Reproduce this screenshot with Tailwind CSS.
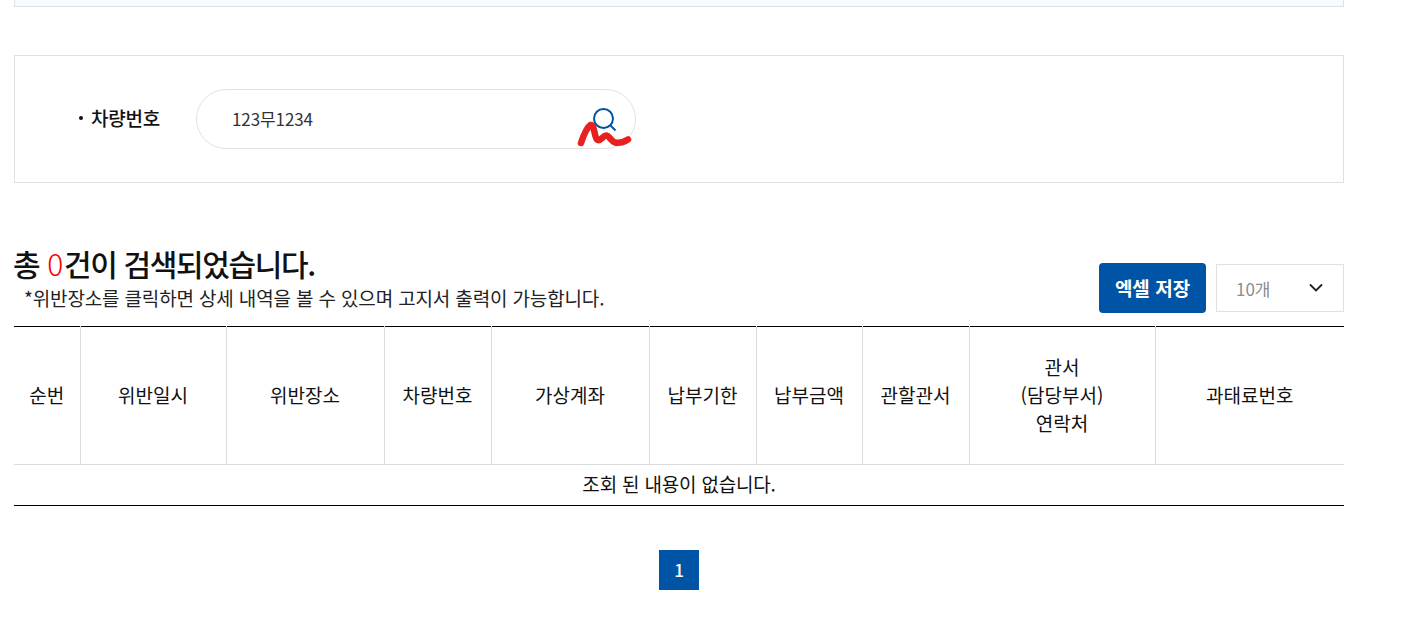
<!DOCTYPE html>
<html lang="ko">
  <head>
    <meta charset="UTF-8" />
    <title>차량번호 조회</title>
    <script src="https://cdn.jsdelivr.net/npm/@tailwindcss/browser@4"></script>
  </head>
  <body class="bg-white text-black font-['Noto_Sans_CJK_KR','Noto_Sans',sans-serif] h-[635px] overflow-hidden">
    <div class="ml-[14px] w-[1330px]">
      <!-- 상단 박스 -->
      <div class="h-[7px] bg-[#f7fafe] border-x border-b border-[#e1e1e1]"></div>

      <!-- 검색 -->
      <section class="mt-[48px] h-[128px] border border-[#e1e1e1] flex items-center pl-[62px]">
        <span class="text-[19px] font-medium w-[119px] tracking-[-0.2px] text-[#111] -mt-[2px] flex items-center"><span class="w-[4px] h-[4px] ml-[2px] mr-[8px] rounded-full bg-[#111]"></span>차량번호</span>
        <div class="relative w-[440px] h-[60px] rounded-[30px] border border-[#e1e1e1] flex items-center pl-[35px] text-[17px] text-[#333] tracking-[-0.1px]">
          123무1234
          <svg class="absolute left-[380px] top-[16px] w-[62px] h-[48px]" viewBox="0 0 62 48" fill="none">
            <circle cx="26.500" cy="12.500" r="9.500" stroke="#0054a6" stroke-width="2" />
            <path d="M33.500 19.500 L38.500 24.500" stroke="#0054a6" stroke-width="2" />
            <path d="M4 37 C6 31 9 22 13.500 19 C17.500 18 17 30 20 33.500 C23.500 36.500 26 29 29.500 29.500 C32.500 30 34 35 38 36.500 C42 37.500 47 36 51 33.500" stroke="#e8201f" stroke-width="6.500" stroke-linecap="round" stroke-linejoin="round" />
          </svg>
        </div>
      </section>

      <!-- 결과 헤더 -->
      <div class="mt-[60px] h-[83px] flex justify-between">
        <div>
          <h2 class="mt-[2px] -ml-[1px] h-[36px] leading-[36px] text-[30px] font-medium tracking-[-1.35px] text-[#111]">총 <span class="ml-[1px] mr-[2px] text-[#f00] font-light">0</span>건이 검색되었습니다.</h2>
          <p class="mt-[5px] ml-[10px] text-[19px] leading-[24px] text-[#222] tracking-[-0.15px]">*위반장소를 클릭하면 상세 내역을 볼 수 있으며 고지서 출력이 가능합니다.</p>
        </div>
        <div class="flex gap-[10px] mt-[20px] items-start">
          <button class="w-[107px] h-[50px] rounded-[4px] bg-[#0054a6] text-white text-[19px] font-semibold">엑셀 저장</button>
          <div class="mt-[1px] w-[128px] h-[48px] border border-[#e1e1e1] flex items-center justify-between pl-[19px] pr-[19px] text-[17px] text-[#8c8c8c]">
            <span class="mt-[1px]">10개</span>
            <svg class="w-[16px] h-[10px]" viewBox="0 0 16 10" fill="none"><path d="M2 1.500 L8 7.500 L14 1.500" stroke="#222" stroke-width="1.800" /></svg>
          </div>
        </div>
      </div>

      <!-- 목록 -->
      <table class="w-[1330px] table-fixed border-collapse border-t border-b border-t-black border-b-black text-[19px] text-[#111]">
        <colgroup>
          <col class="w-[66px]" /><col class="w-[146px]" /><col class="w-[158px]" /><col class="w-[107px]" /><col class="w-[158px]" />
          <col class="w-[107px]" /><col class="w-[106px]" /><col class="w-[107px]" /><col class="w-[186px]" /><col class="w-[189px]" />
        </colgroup>
        <thead>
          <tr class="h-[138px] border-b border-[#dcdcdc] leading-[28px]">
            <th class="font-normal pb-[1px] border-r border-[#dcdcdc]">순번</th>
            <th class="font-normal pb-[1px] border-r border-[#dcdcdc]">위반일시</th>
            <th class="font-normal pb-[1px] border-r border-[#dcdcdc]">위반장소</th>
            <th class="font-normal pb-[1px] border-r border-[#dcdcdc]">차량번호</th>
            <th class="font-normal pb-[1px] border-r border-[#dcdcdc]">가상계좌</th>
            <th class="font-normal pb-[1px] border-r border-[#dcdcdc]">납부기한</th>
            <th class="font-normal pb-[1px] border-r border-[#dcdcdc]">납부금액</th>
            <th class="font-normal pb-[1px] border-r border-[#dcdcdc]">관할관서</th>
            <th class="font-normal pb-[1px] border-r border-[#dcdcdc]">관서<br />(담당부서)<br />연락처</th>
            <th class="font-normal pb-[1px]">과태료번호</th>
          </tr>
        </thead>
        <tbody>
          <tr class="h-[41px]">
            <td colspan="10" class="text-center pb-[2px] tracking-[-0.2px]">조회 된 내용이 없습니다.</td>
          </tr>
        </tbody>
      </table>

      <!-- 페이지 -->
      <div class="mt-[44px] flex justify-center">
        <a class="w-[40px] h-[40px] bg-[#0054a6] text-white text-[17px] font-medium flex items-center justify-center">1</a>
      </div>
    </div>
  </body>
</html>
